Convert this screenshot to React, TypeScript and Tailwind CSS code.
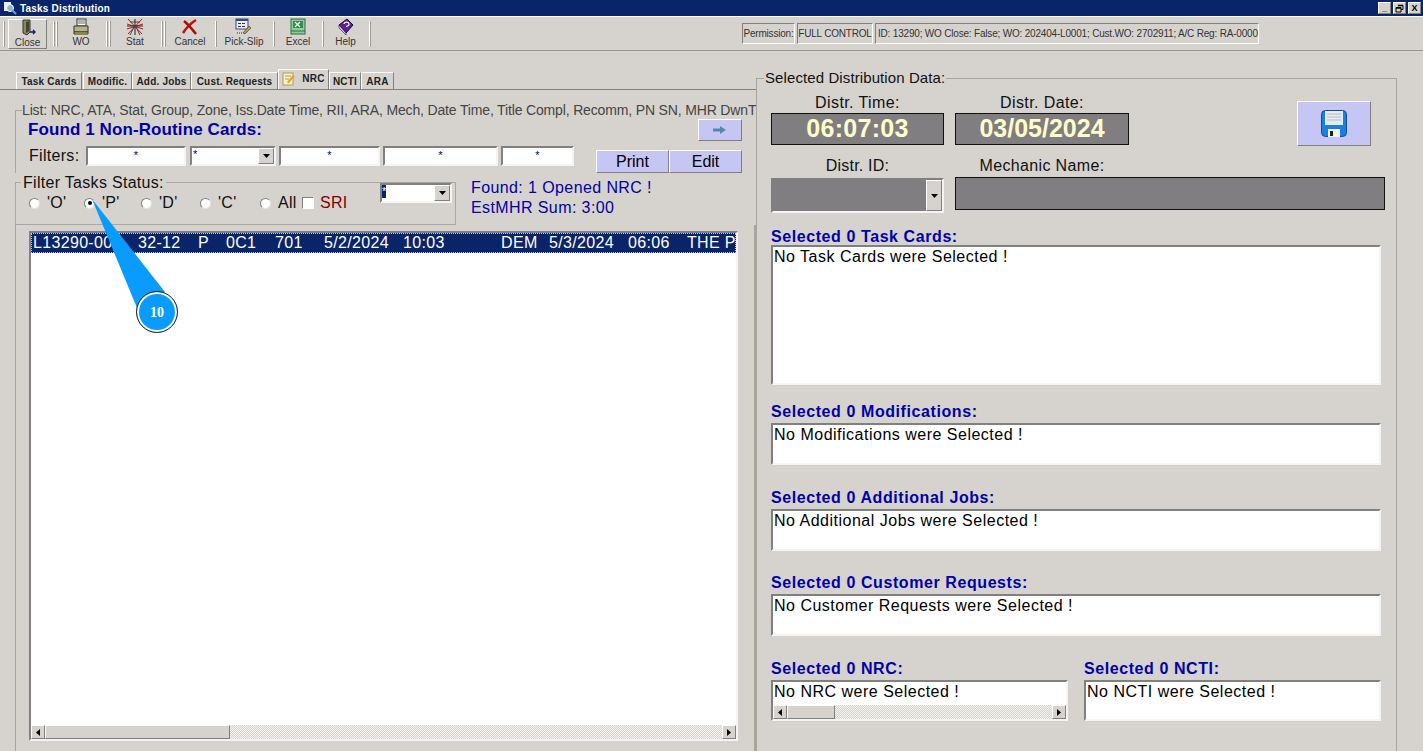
const sunken = "border-2 border-t-[#808080] border-l-[#808080] border-r-[#f4f4f4] border-b-[#f4f4f4]";
const thin = "border border-t-[#808080] border-l-[#808080] border-r-white border-b-white";
const raised = "border border-t-white border-l-white border-r-[#808080] border-b-[#808080]";

function CloseIcon() {
  return (
    <svg width="18" height="18" viewBox="0 0 18 18">
      <path d="M4 1h7v12l-3 3-4-2z" fill="#8a8a5c" stroke="#333" />
      <path d="M7 3l3-1v10l-3 2z" fill="#45452a" />
      <path d="M11 13h5m-2-2l2 2-2 2" stroke="#0a246a" strokeWidth="1.4" fill="none" />
    </svg>
  );
}
function WoIcon() {
  return (
    <svg width="18" height="18" viewBox="0 0 18 18">
      <rect x="5" y="1" width="9" height="7" fill="#fff" stroke="#333" />
      <path d="M6 3h7M6 5h7" stroke="#666" />
      <path d="M2 8h14v6H2z" fill="#b5b58a" stroke="#333" />
      <path d="M2 14h14v2H2z" fill="#e3dc5a" stroke="#333" />
    </svg>
  );
}
function StatIcon() {
  return (
    <svg width="18" height="18" viewBox="0 0 18 18" fill="none">
      <path d="M2 1l14 15M16 1L2 16M1 6l16 5M17 6L1 11" stroke="#c01818" />
      <path d="M9 1v16M1 8h16" stroke="#222" />
      <path d="M4 17L9 7l5 10M4 4h10" stroke="#444" />
    </svg>
  );
}
function CancelIcon() {
  return (
    <svg width="18" height="18" viewBox="0 0 18 18" fill="none">
      <path d="M2 15C6 9 10 5 15 2" stroke="#c41010" strokeWidth="2.6" />
      <path d="M3 3c4 3 8 8 12 13" stroke="#a80c0c" strokeWidth="2.6" />
    </svg>
  );
}
function PickIcon() {
  return (
    <svg width="18" height="18" viewBox="0 0 18 18">
      <rect x="1" y="1" width="12" height="10" fill="#e8ecf8" stroke="#3a4a80" />
      <path d="M1 1h12v2H1z" fill="#3a4a90" />
      <path d="M3 5h3v1H3zm4 0h3v1H7zM3 8h3v1H3zm4 0h3v1H7z" fill="#334" />
      <path d="M8 15l6-7 2 2-6 6z" fill="#b0a040" stroke="#333" strokeWidth=".6" />
      <path d="M2 15h1m1 0h1m1 0h1" stroke="#333" />
    </svg>
  );
}
function ExcelIcon() {
  return (
    <svg width="18" height="18" viewBox="0 0 18 18">
      <rect x="2" y="1" width="14" height="15" fill="#8fce9a" stroke="#2f6d3c" />
      <rect x="4" y="3" width="10" height="7" fill="#2f8f48" />
      <path d="M6 4l5 5M11 4L6 9" stroke="#fff" strokeWidth="1.2" />
      <path d="M2 13h14" stroke="#2f6d3c" />
    </svg>
  );
}
function HelpIcon() {
  return (
    <svg width="18" height="18" viewBox="0 0 18 18">
      <path d="M2 7l8-6 6 6-7 8z" fill="#5a1f9a" stroke="#1d0a3a" />
      <path d="M2 7l7 8v2L2 10z" fill="#d9cfe8" stroke="#1d0a3a" strokeWidth=".6" />
      <path d="M7 6a2.500 2 0 1 1 3 2l-.5 1" stroke="#fff" strokeWidth="1.2" fill="none" />
    </svg>
  );
}

function ToolSep({ ml }: { ml?: string }) {
  return <div className={`h-[26px] w-[2px] border-l border-l-white border-r border-r-[#a09c94] ${ml ?? ""}`} />;
}

function ToolBtn({ label, width, active, children }: { label: string; width: string; active?: boolean; children: React.ReactNode }) {
  return (
    <div className={`flex h-[30px] flex-col items-center justify-start ${width} ${active ? raised : ""}`}>
      <div className="h-[18px] -mt-[1px]">{children}</div>
      <div className="text-[10px] leading-[11px] text-[#333]">{label}</div>
    </div>
  );
}

function Tab({ label, width, active, icon }: { label: string; width: string; active?: boolean; icon?: boolean }) {
  return (
    <div
      className={`flex items-center justify-center gap-[7px] text-[10px] font-bold tracking-[0.2px] text-[#222] ${width} ${
        active ? "h-[20px] border-l border-t border-white border-r border-r-[#808080] pb-[2px]" : "h-[17px] border-l border-t border-white border-r border-r-[#808080]"
      }`}
    >
      {icon && (
        <svg width="13" height="14" viewBox="0 0 13 14">
          <rect x="1" y="1" width="10" height="12" fill="#fbf0c8" stroke="#b09a5a" />
          <path d="M3 4h6M3 7h4" stroke="#b09a5a" />
          <path d="M5 10l6-7 1.500 1.500-6 7z" fill="#e8a020" />
        </svg>
      )}
      {label}
    </div>
  );
}

function Radio({ label, width, checked }: { label: string; width: string; checked?: boolean }) {
  return (
    <div className={`flex items-center ${width}`}>
      <div className="flex h-[11px] w-[11px] items-center justify-center rounded-full border border-t-[#808080] border-l-[#808080] border-r-[#e4e2dc] border-b-[#e4e2dc] bg-white">
        {checked && <div className="h-[4px] w-[4px] rounded-full bg-black" />}
      </div>
      <span className="ml-[7px] text-[16px] leading-[16px] tracking-[0.3px] text-[#111]">{label}</span>
    </div>
  );
}

function FilterInput({ width }: { width: string }) {
  return (
    <div className={`flex h-[20px] justify-center bg-white text-[11px] leading-[14px] text-[#000080] ${width} ${sunken}`}>*</div>
  );
}

function ArrowDown() {
  return (
    <div className={`flex h-full w-[16px] items-center justify-center bg-[#d6d3ce] ${raised}`}>
      <svg width="7" height="4" viewBox="0 0 7 4">
        <path d="M0 0h7L3.500 4z" fill="#000" />
      </svg>
    </div>
  );
}

function ScrollArrow({ dir }: { dir: "l" | "r" }) {
  return (
    <div className={`flex h-full w-[14px] shrink-0 items-center justify-center bg-[#d6d3ce] ${raised}`}>
      <svg width="4" height="7" viewBox="0 0 4 7">
        <path d={dir === "l" ? "M4 0v7L0 3.500z" : "M0 0v7l4-3.500z"} fill="#000" />
      </svg>
    </div>
  );
}

function ScrollBar({ thumb, height }: { thumb: string; height: string }) {
  return (
    <div className={`flex w-full ${height} bg-[repeating-conic-gradient(#d6d3ce_0_25%,#f4f3f0_0_50%)] bg-[length:2px_2px]`}>
      <ScrollArrow dir="l" />
      <div className={`${thumb} h-full bg-[#d6d3ce] ${raised}`} />
      <div className="flex-1" />
      <ScrollArrow dir="r" />
    </div>
  );
}

function Section({ label, text, box, width, top, gap }: { label: string; text: string; box: string; width: string; top: string; gap: string }) {
  return (
    <div className={`${top} ${width}`}>
      <div className="h-[18px] text-[16px] font-bold leading-[18px] tracking-[0.58px] text-[#0000a8]">{label}</div>
      <div className={`${gap} ${box} w-full bg-white pl-[1px] pt-[1px] text-[16px] leading-[18px] tracking-[0.5px] text-black ${sunken}`}>{text}</div>
    </div>
  );
}

const cols: [string, string][] = [
  ["L13290-001", "w-[105px]"],
  ["32-12", "w-[60px]"],
  ["P", "w-[28px]"],
  ["0C1", "w-[49px]"],
  ["701", "w-[49px]"],
  ["5/2/2024", "w-[79px]"],
  ["10:03", "w-[98px]"],
  ["DEM", "w-[48px]"],
  ["5/3/2024", "w-[79px]"],
  ["06:06", "w-[59px]"],
  ["THE P", "w-[50px]"],
];

export default function App() {
  return (
    <div className="relative flex h-[751px] w-[1423px] flex-col overflow-hidden bg-[#d6d3ce] font-['Liberation_Sans',Arial,sans-serif]">
      {/* Title bar */}
      <div className="flex h-[16px] shrink-0 items-center bg-[#0a246a] pl-[3px] pr-[2px]">
        <svg width="14" height="14" viewBox="0 0 14 14">
          <rect x="1" y="1" width="7" height="9" fill="#e8eef8" />
          <circle cx="7" cy="7" r="3.500" fill="#8ab4d8" stroke="#fff" />
          <path d="M9 9l4 4" stroke="#6aa0d0" strokeWidth="2" />
        </svg>
        <span className="ml-[3px] text-[10px] font-bold tracking-[0.2px] text-white">Tasks Distribution</span>
        <div className="ml-auto flex gap-[2px]">
          {["_", "", "X"].map((s, i) => (
            <div key={i} className={`flex h-[12px] w-[13px] items-center justify-center bg-[#d6d3ce] text-[9px] font-bold leading-[10px] text-black ${raised}`}>
              {i === 1 ? (
                <svg width="9" height="9" viewBox="0 0 9 9" fill="none" stroke="#000">
                  <path d="M3 1.500h5v4H6M1 3.500h5v4.500H1z" />
                  <path d="M1 4h5M3 1.500h5" strokeWidth="1.4" />
                </svg>
              ) : (
                s
              )}
            </div>
          ))}
        </div>
      </div>
      <div className="h-px shrink-0 bg-white" />
      {/* Toolbar */}
      <div className="flex h-[34px] shrink-0 items-center border-b border-b-[#9a978f] pl-[3px]">
        <ToolSep />
        <ToolBtn label="Close" width="ml-[3px] w-[39px]" active><CloseIcon /></ToolBtn>
        <ToolSep ml="ml-[6px]" />
        <ToolSep ml="ml-px" />
        <ToolBtn label="WO" width="w-[46px]"><WoIcon /></ToolBtn>
        <ToolSep ml="ml-[2px]" />
        <ToolSep ml="ml-px" />
        <ToolBtn label="Stat" width="w-[48px]"><StatIcon /></ToolBtn>
        <ToolSep ml="ml-[2px]" />
        <ToolSep ml="ml-px" />
        <ToolBtn label="Cancel" width="w-[48px]"><CancelIcon /></ToolBtn>
        <ToolSep ml="ml-px" />
        <ToolBtn label="Pick-Slip" width="w-[54px]"><PickIcon /></ToolBtn>
        <ToolSep ml="ml-[2px]" />
        <ToolBtn label="Excel" width="w-[46px]"><ExcelIcon /></ToolBtn>
        <ToolSep ml="ml-px" />
        <ToolBtn label="Help" width="w-[43px]"><HelpIcon /></ToolBtn>
        <ToolSep ml="ml-[2px]" />
        <div className="ml-[371px] flex h-[21px] items-stretch gap-[2px] whitespace-nowrap text-[10px] tracking-[-0.19px] text-[#333]">
          <div className={`flex w-[53px] items-center justify-center ${thin}`}>Permission:</div>
          <div className={`flex w-[76px] items-center justify-center ${thin}`}>FULL CONTROL</div>
          <div className={`flex w-[384px] items-center pl-[2px] ${thin}`}>ID: 13290; WO Close: False; WO: 202404-L0001; Cust.WO: 2702911; A/C Reg: RA-0000</div>
        </div>
      </div>

      {/* Body */}
      <div className="flex flex-1">
        {/* Left column */}
        <div className="flex w-[756px] shrink-0 flex-col">
          <div className="flex h-[39px] shrink-0 items-end border-b border-b-[#808080] pl-[16px]">
            <Tab label="Task Cards" width="w-[66px]" />
            <div className="w-px" />
            <Tab label="Modific." width="w-[49px]" />
            <Tab label="Add. Jobs" width="w-[59px]" />
            <Tab label="Cust. Requests" width="w-[87px]" />
            <Tab label="NRC" width="w-[51px]" active icon />
            <Tab label="NCTI" width="w-[32px]" />
            <Tab label="ARA" width="w-[33px]" />
          </div>

          <div className="ml-[15px] mt-[20px] border-l border-l-[#a8a59d]">
            <div className="-mt-[9px] flex h-[18px] items-center whitespace-nowrap text-[14px] tracking-[-0.155px] text-[#444]">
              <span className="h-px w-[6px] shrink-0 bg-[#a8a59d]" />
              List: NRC, ATA, Stat, Group, Zone, Iss.Date Time, RII, ARA, Mech, Date Time, Title Compl, Recomm, PN SN, MHR DwnT
            </div>
            <div className="flex h-[22px] items-center justify-between pl-[12px] pr-[14px]">
              <span className="text-[17px] font-bold tracking-[0.1px] text-[#0000a8]">Found 1 Non-Routine Cards:</span>
              <div className={`flex h-[22px] w-[44px] items-center justify-center bg-[#c6c6f4] ${raised}`}>
                <svg width="14" height="10" viewBox="0 0 14 10">
                  <path d="M0 3.500h7V1l6 4-6 4V6.500H0z" fill="#5b85ad" />
                </svg>
              </div>
            </div>
            <div className="mt-[5px] flex h-[27px] items-start pl-[13px] pr-[14px]">
              <span className="mt-px w-[57px] text-[16px] leading-[18px] tracking-[0.3px] text-[#111]">Filters:</span>
              <FilterInput width="w-[100px]" />
              <div className={`ml-[4px] flex h-[20px] w-[86px] bg-white ${sunken}`}>
                <span className="flex-1 pl-px text-[11px] leading-[12px] text-[#000080]">*</span>
                <ArrowDown />
              </div>
              <div className="w-[3px]" />
              <FilterInput width="w-[101px]" />
              <div className="w-[3px]" />
              <FilterInput width="w-[115px]" />
              <div className="w-[3px]" />
              <FilterInput width="w-[73px]" />
              <div className="ml-auto mt-[4px] flex">
                <div className={`flex h-[23px] w-[73px] items-center justify-center bg-[#c6c6f4] pt-px text-[16px] text-black ${raised}`}>Print</div>
                <div className={`flex h-[23px] w-[73px] items-center justify-center bg-[#c6c6f4] pt-px text-[16px] text-black ${raised}`}>Edit</div>
              </div>
            </div>
          </div>

          <div className="ml-[15px] mt-[9px] flex">
            <div className="flex h-[43px] w-[441px] items-start border border-[#aaa79f]">
              <div className="-mt-[10px] w-[364px]">
                <div className="ml-[5px] mt-px flex h-[18px] w-fit items-center bg-[#d6d3ce] px-[2px] text-[16px] tracking-[0.3px] text-[#111]">Filter Tasks Status:</div>
                <div className="ml-[13px] mt-[3px] flex h-[16px] items-center">
                  <Radio label="'O'" width="w-[55px]" />
                  <Radio label="'P'" width="w-[57px]" checked />
                  <Radio label="'D'" width="w-[59px]" />
                  <Radio label="'C'" width="w-[60px]" />
                  <Radio label="All" width="w-[42px]" />
                  <div className={`h-[12px] w-[12px] bg-white ${thin}`} />
                  <span className="ml-[6px] text-[16px] leading-[16px] tracking-[0.3px] text-[#800000]">SRI</span>
                </div>
              </div>
              <div className={`flex h-[20px] w-[72px] bg-white ${sunken}`}>
                <span className="flex-1 text-[11px] leading-[12px]">
                  <span className="inline-block h-[13px] w-[4px] bg-[#0a246a] text-white">*</span>
                </span>
                <ArrowDown />
              </div>
            </div>
            <div className="ml-[15px] -mt-[4px] text-[16px] leading-[20px] tracking-[0.4px] text-[#0000a8]">
              <div>Found: 1 Opened NRC !</div>
              <div>EstMHR Sum: 3:00</div>
            </div>
          </div>

          <div className="ml-[15px] flex-1 border-l border-r-2 border-l-[#a8a59d] border-r-[#a8a59d] pl-[13px] pt-[6px]">
            <div className={`flex h-[510px] w-[709px] flex-col bg-white ${sunken}`}>
              <div className="flex h-[20px] items-center overflow-hidden whitespace-nowrap border border-dotted border-[#c8c8c8] bg-[#0a246a] pl-[1px] text-[16px] tracking-[0.33px] text-white">
                {cols.map(([t, w]) => (
                  <span key={t} className={`shrink-0 ${w}`}>{t}</span>
                ))}
              </div>
              <div className="flex-1" />
              <ScrollBar thumb="w-[185px]" height="h-[14px]" />
            </div>
          </div>
        </div>

        {/* Right column */}
        <div className="mt-[27px] h-[700px] w-[641px] shrink-0 border-l border-r border-t border-[#a8a59d] pl-[14px]">
          <div className="-ml-[7px] -mt-[10px] flex h-[18px] w-fit items-center bg-[#d6d3ce] px-[1px] text-[15px] tracking-[0.1px] text-[#111]">Selected Distribution Data:</div>
          <div className="mt-[7px] flex">
            <div className="w-[173px]">
              <div className="h-[18px] text-center text-[16px] leading-[18px] tracking-[0.4px] text-[#111]">Distr. Time:</div>
              <div className="mt-[1px] flex h-[32px] items-center justify-center border border-[#111] bg-[#807e80] text-[25px] font-bold tracking-[0.3px] text-[#ffffcc]">06:07:03</div>
            </div>
            <div className="ml-[11px] w-[174px]">
              <div className="h-[18px] text-center text-[16px] leading-[18px] tracking-[0.4px] text-[#111]">Distr. Date:</div>
              <div className="mt-[1px] flex h-[32px] items-center justify-center border border-[#111] bg-[#807e80] text-[25px] font-bold text-[#ffffcc]">03/05/2024</div>
            </div>
            <div className={`ml-[168px] mt-[7px] flex h-[45px] w-[74px] items-center justify-center bg-[#c6c6f4] ${raised}`}>
              <svg width="26" height="27" viewBox="0 0 26 27">
                <rect x=".5" y=".5" width="25" height="26" rx="4" fill="#1a7fe0" stroke="#0f4c9c" />
                <rect x="4" y="1" width="18" height="14" fill="#e6ebf0" />
                <path d="M6 4h14M6 7h14M6 10h14" stroke="#b4bcc6" />
                <rect x="7" y="19" width="12" height="8" fill="#f2f2f2" />
                <rect x="9" y="21" width="3" height="5" fill="#222" />
              </svg>
            </div>
          </div>
          <div className="mt-[11px] flex">
            <div className="w-[173px]">
              <div className="h-[18px] text-center text-[16px] leading-[18px] tracking-[0.2px] text-[#111]">Distr. ID:</div>
              <div className={`mt-[3px] flex h-[35px] bg-[#807e80] ${sunken}`}>
                <div className="flex-1" />
                <ArrowDown />
              </div>
            </div>
            <div className="ml-[11px] w-[430px]">
              <div className="h-[18px] w-[174px] text-center text-[16px] leading-[18px] tracking-[0.35px] text-[#111]">Mechanic Name:</div>
              <div className="mt-[2px] h-[33px] border border-[#111] bg-[#807e80]" />
            </div>
          </div>
          <Section top="mt-[15px]" gap="-mt-px" box="h-[140px]" width="w-[610px]" label="Selected 0 Task Cards:" text="No Task Cards were Selected !" />
          <Section top="mt-[18px]" gap="mt-[2px]" box="h-[42px]" width="w-[610px]" label="Selected 0 Modifications:" text="No Modifications were Selected !" />
          <Section top="mt-[24px]" gap="mt-[2px]" box="h-[42px]" width="w-[610px]" label="Selected 0 Additional Jobs:" text="No Additional Jobs were Selected !" />
          <Section top="mt-[23px]" gap="mt-[2px]" box="h-[42px]" width="w-[610px]" label="Selected 0 Customer Requests:" text="No Customer Requests were Selected !" />
          <div className="flex">
            <div className="mt-[24px] w-[297px]">
              <div className="h-[18px] text-[16px] font-bold leading-[18px] tracking-[0.58px] text-[#0000a8]">Selected 0 NRC:</div>
              <div className={`mt-[2px] flex h-[41px] w-full flex-col justify-between bg-white text-[16px] leading-[18px] tracking-[0.5px] text-black ${sunken}`}>
                <span className="pl-[1px] pt-[1px]">No NRC were Selected !</span>
                <ScrollBar thumb="w-[48px]" height="h-[14px]" />
              </div>
            </div>
            <div className="ml-[16px] w-[297px]">
              <Section top="mt-[24px]" gap="mt-[2px]" box="h-[41px]" width="w-[297px]" label="Selected 0 NCTI:" text="No NCTI were Selected !" />
            </div>
          </div>
        </div>
      </div>

      {/* Callout over the list */}
      <svg className="pointer-events-none absolute left-[88px] top-[195px]" width="95" height="125" viewBox="0 0 95 125">
        <path d="M4 4L49 113 77 97z" fill="#0a9bff" />
      </svg>
      <div className="absolute left-[136px] top-[291px] flex h-[42px] w-[42px] items-center justify-center rounded-full border border-[#1a2a3a] bg-[#0a9bff] font-['Liberation_Serif',serif] text-[14px] font-bold text-white shadow-[inset_0_0_0_2px_#fff]">
        10
      </div>
    </div>
  );
}
